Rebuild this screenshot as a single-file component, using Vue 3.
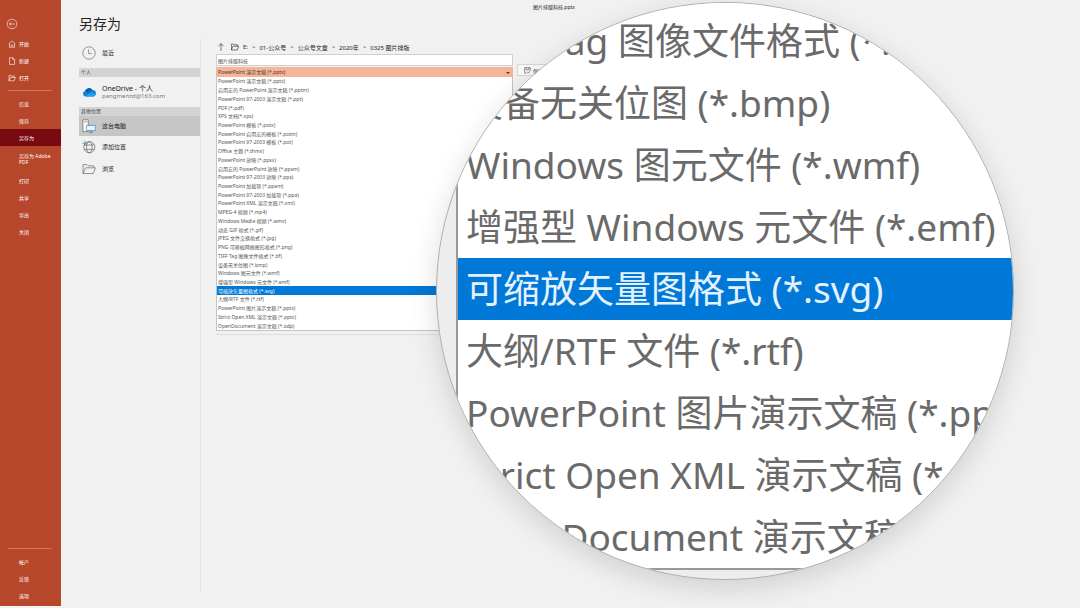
<script setup>
import { ref } from 'vue'

const mainNav = ['信息', '保存', '另存为', '另存为 Adobe PDF', '打印', '共享', '导出', '关闭']
const footNav = ['帐户', '反馈', '选项']
const crumbs = ['E:', '01-公众号', '公众号文章', '2020年', '0325 图片排版']
const formats = [
  'PowerPoint 演示文稿 (*.pptx)',
  '启用宏的 PowerPoint 演示文稿 (*.pptm)',
  'PowerPoint 97-2003 演示文稿 (*.ppt)',
  'PDF (*.pdf)',
  'XPS 文档(*.xps)',
  'PowerPoint 模板 (*.potx)',
  'PowerPoint 启用宏的模板 (*.potm)',
  'PowerPoint 97-2003 模板 (*.pot)',
  'Office 主题 (*.thmx)',
  'PowerPoint 放映 (*.ppsx)',
  '启用宏的 PowerPoint 放映 (*.ppsm)',
  'PowerPoint 97-2003 放映 (*.pps)',
  'PowerPoint 加载项 (*.ppam)',
  'PowerPoint 97-2003 加载项 (*.ppa)',
  'PowerPoint XML 演示文稿 (*.xml)',
  'MPEG-4 视频 (*.mp4)',
  'Windows Media 视频 (*.wmv)',
  '动态 GIF 格式 (*.gif)',
  'JPEG 文件交换格式 (*.jpg)',
  'PNG 可移植网络图形格式 (*.png)',
  'TIFF Tag 图像文件格式 (*.tif)',
  '设备无关位图 (*.bmp)',
  'Windows 图元文件 (*.wmf)',
  '增强型 Windows 元文件 (*.emf)',
  '可缩放矢量图格式 (*.svg)',
  '大纲/RTF 文件 (*.rtf)',
  'PowerPoint 图片演示文稿 (*.pptx)',
  'Strict Open XML 演示文稿 (*.pptx)',
  'OpenDocument 演示文稿 (*.odp)'
]
const highlighted = 24
const magnified = formats.slice(20)
const fileName = ref('图片排版科技')
const fileType = ref(formats[0])
</script>

<template>
  <div class="app">
    <nav class="sidebar">
      <button class="back" aria-label="返回">
        <svg viewBox="0 0 12 12"><circle cx="6" cy="6" r="4.8" /><path d="M9 6H3.4M5.6 3.8 3.4 6l2.2 2.2" /></svg>
      </button>
      <button class="nav-item">
        <svg viewBox="0 0 8 8"><path d="M.6 4 4 .9 7.4 4M1.5 3.4v4h1.8V5h1.4v2.4h1.8v-4" /></svg><span>开始</span>
      </button>
      <button class="nav-item">
        <svg viewBox="0 0 8 8"><path d="M1.5.7h3.3l1.8 1.8v4.9H1.5zM4.8.7v1.8h1.8" /></svg><span>新建</span>
      </button>
      <button class="nav-item">
        <svg viewBox="0 0 8 8"><path d="M1 6.8V1.4h2l.7.8h2.6v1.2M1 6.8l1.4-3.4h5L6.1 6.8z" /></svg><span>打开</span>
      </button>
      <hr />
      <button
        v-for="(n, i) in mainNav" :key="n" class="nav-item plain"
        :class="{ active: i === 2, tall: i === 3 }"
      >
        <span>{{ n }}</span>
      </button>
      <div class="foot">
        <hr />
        <button v-for="n in footNav" :key="n" class="nav-item plain"><span>{{ n }}</span></button>
      </div>
    </nav>

    <div class="window">
      <header class="doc-name">图片排版科技.pptx</header>
      <div class="content">
        <section class="places">
          <h1>另存为</h1>
          <button class="place recent">
            <svg viewBox="0 0 14 14"><circle cx="7" cy="7" r="6.2" /><path d="M6.6 3.4v4.2h3.2" /></svg><span>最近</span>
          </button>
          <h2>个人</h2>
          <button class="place drive">
            <svg viewBox="0 0 14 14" class="cloud">
              <path d="M3.3 11.4A2.7 2.7 0 0 1 3 6.1 4.1 4.1 0 0 1 10.4 5a3.2 3.2 0 0 1 .6 6.4z" fill="#1582d6" />
              <path d="M3 6.1A4.1 4.1 0 0 1 10.4 5L5.7 8.2z" fill="#0864b4" />
              <path d="M3.3 11.4 9 7.6l4.6 1.8a3.1 3.1 0 0 1-2.6 2z" fill="#27a2ee" />
            </svg>
            <span class="account">OneDrive - 个人<small>pangmenzd@163.com</small></span>
          </button>
          <h2>其他位置</h2>
          <button class="place selected">
            <svg viewBox="0 0 14 14">
              <path d="M1 .8h5.2v11.8H1z" fill="#fff" /><path d="M2.2 2.8h2.8" />
              <path d="M4.4 6.4h9v5.2h-9z" fill="#e4f4fd" stroke="#2878b4" /><path d="M7.2 13.4h3.6M9 11.6v1.8" />
            </svg><span>这台电脑</span>
          </button>
          <button class="place">
            <svg viewBox="0 0 14 14"><circle cx="7.3" cy="7.2" r="5.6" /><ellipse cx="7.3" cy="7.2" rx="2.8" ry="5.6" /><path d="M2.2 5h10.2M2.2 9.4h10.2" /><path d="M.4 3.2h5M2.9.7v5" stroke="#218a5a" /></svg><span>添加位置</span>
          </button>
          <button class="place">
            <svg viewBox="0 0 14 14"><path d="M1 11.5V2.6h3.8l1.2 1.2h5.6v2M1 11.5l2.5-5.7h10l-2.2 5.7z" /></svg><span>浏览</span>
          </button>
        </section>

        <section class="files">
          <div class="path">
            <button class="up" aria-label="上一级"><svg viewBox="0 0 8 8"><path d="M4 7.8V.6M1.4 3.2 4 .6l2.6 2.6" /></svg></button>
            <svg class="folder" viewBox="0 0 8 8"><path d="M.4 7V1h2.2l.8.8h3v1.4M.4 7l1.5-3.8h5.8L6.3 7z" /></svg>
            <template v-for="(c, i) in crumbs" :key="c">
              <span v-if="i">&gt;</span><a href="#">{{ c }}</a>
            </template>
          </div>
          <div class="form">
            <div class="fields">
              <input v-model="fileName" aria-label="文件名" />
              <div class="type">
                <select v-model="fileType" aria-label="保存类型">
                  <option v-for="f in formats" :key="f">{{ f }}</option>
                </select>
                <ul role="listbox" aria-label="文件格式">
                  <li v-for="(f, i) in formats" :key="f" role="option" :aria-selected="i === highlighted">{{ f }}</li>
                </ul>
              </div>
            </div>
            <button class="save">
              <svg viewBox="0 0 8 8"><path d="M3 7H.7V.8h6.5v3M2.3.8v2.4h3.2V.8M3.6 5.4 5 7l2.4-3" /></svg>保存
            </button>
          </div>
        </section>
      </div>
    </div>

    <div class="lens" aria-hidden="true">
      <div class="lens-list">
        <div v-for="(f, i) in magnified" :key="f" class="lens-row" :class="{ on: i === 4 }">{{ f }}</div>
      </div>
    </div>
  </div>
</template>

<style>
body { margin: 0; background: #f1f1f1; }
</style>

<style scoped>
.app {
  position: relative;
  display: flex;
  min-height: 100vh;
  overflow: hidden;
  background: #f1f1f1;
  color: #333;
  font-family: "Noto Sans", "Noto Sans CJK SC", sans-serif;
  font-size: 5px;
}
* { box-sizing: border-box; }
button { border: 0; padding: 0; margin: 0; background: none; color: inherit; font: inherit; text-align: left; }
svg { fill: none; stroke: currentColor; stroke-width: 0.6; flex: none; }

.sidebar {
  width: 61px;
  margin-bottom: 2px;
  padding-top: 18px;
  display: flex;
  flex-direction: column;
  background: #b7472a;
  color: #fff;
}
.back { height: 12px; margin: 0 0 5px 6px; }
.back svg { width: 12px; height: 12px; display: block; }
.nav-item { display: flex; align-items: center; gap: 3px; min-height: 17px; padding-left: 8px; line-height: 6px; }
.nav-item svg { width: 8px; height: 8px; }
.plain { padding: 0 4px 0 19px; }
.tall { min-height: 26px; }
.active { background: #790a10; }
hr { width: 44px; height: 1px; margin: 4px 0 4px 8px; border: 0; background: #dd7552; }
.foot { display: flex; flex-direction: column; margin-top: auto; padding-bottom: 2px; }

.window { flex: 1; display: flex; flex-direction: column; padding-left: 18px; }
.doc-name { margin-left: 454px; height: 14px; line-height: 14px; color: #222; }
.content { flex: 1; display: flex; margin-bottom: 16px; }
.places { width: 121px; display: flex; flex-direction: column; color: #222; }
h1 { margin: 0; font-size: 14px; font-weight: 400; line-height: 20px; height: 24px; }
h2 { margin: 0; padding-left: 2px; height: 9px; line-height: 9px; font-size: 5px; font-weight: 400; background: #d3d3d3; color: #444; }
.place { display: flex; align-items: center; gap: 6px; height: 22px; padding-left: 3px; font-size: 6px; line-height: 8px; }
.place svg { width: 14px; height: 14px; color: #555; }
.recent { height: 30px; }
.drive { height: 30px; font-size: 7px; }
.place .cloud { stroke: none; }
.account { display: flex; flex-direction: column; }
small { font-size: 6px; line-height: 7px; color: #777; }
.selected { height: 20px; background: #c6c6c6; }

.files { flex: 1; margin-top: 24px; padding-left: 15px; border-left: 1px solid #e6e6e6; }
.path { display: flex; align-items: center; gap: 4px; height: 16px; padding-top: 2px; font-size: 6px; color: #222; }
.path a { color: inherit; text-decoration: none; }
.up { margin: 0 2px 0 1px; }
.path svg { display: block; width: 8px; height: 8px; }
.form { display: flex; align-items: flex-start; gap: 4px; }
.fields { width: 297px; }
input, select {
  display: block; width: 100%; margin: 0; padding: 0 1px; border: 1px solid #d0d0d0; border-radius: 0;
  appearance: none; font: inherit; color: #444; background: #fff; height: 12px;
}
.type { position: relative; margin-top: 1px; padding-bottom: 3px; border-bottom: 1px solid #dedede; }
.type::after { content: ""; position: absolute; right: 3px; top: 5px; border: 2px solid transparent; border-top-color: #633; border-bottom: 0; }
select { height: 10px; border-color: #f4b598; background: #f4b598; color: #50332a; }
ul {
  display: grid; grid-auto-rows: 1fr; height: 254px; margin: 0; padding: 0; list-style: none;
  background: #fff; border: 1px solid #c4c4c4; border-top: 0; color: #555;
}
li { display: flex; align-items: center; min-height: 0; padding-left: 1px; line-height: 8px; white-space: nowrap; }
li[aria-selected="true"] { background: #0078d7; color: #fff; }
.save { display: flex; align-items: center; gap: 2px; width: 60px; height: 12px; margin-top: 10px; padding-left: 6px; border: 1px solid #d8d8d8; background: #fafafa; }
.save svg { width: 7px; height: 7px; }

.lens {
  position: absolute;
  left: 436px;
  top: 2px;
  width: 578px;
  height: 578px;
  overflow: hidden;
  border: 1px solid #b0b0b0;
  border-radius: 50%;
  background: #ededef;
  box-shadow: 0 8px 28px rgba(0, 0, 0, 0.14);
}
.lens-list {
  margin-left: 19px;
  padding-top: 7px;
  border-left: 2px solid #999;
  border-bottom: 2px solid #999;
  background: #fff;
}
.lens-row { height: 62px; padding-left: 8px; font-size: 37px; line-height: 62px; white-space: nowrap; color: #6a6a6a; }
.on { background: #0078d7; color: #e4f2ff; }
</style>
